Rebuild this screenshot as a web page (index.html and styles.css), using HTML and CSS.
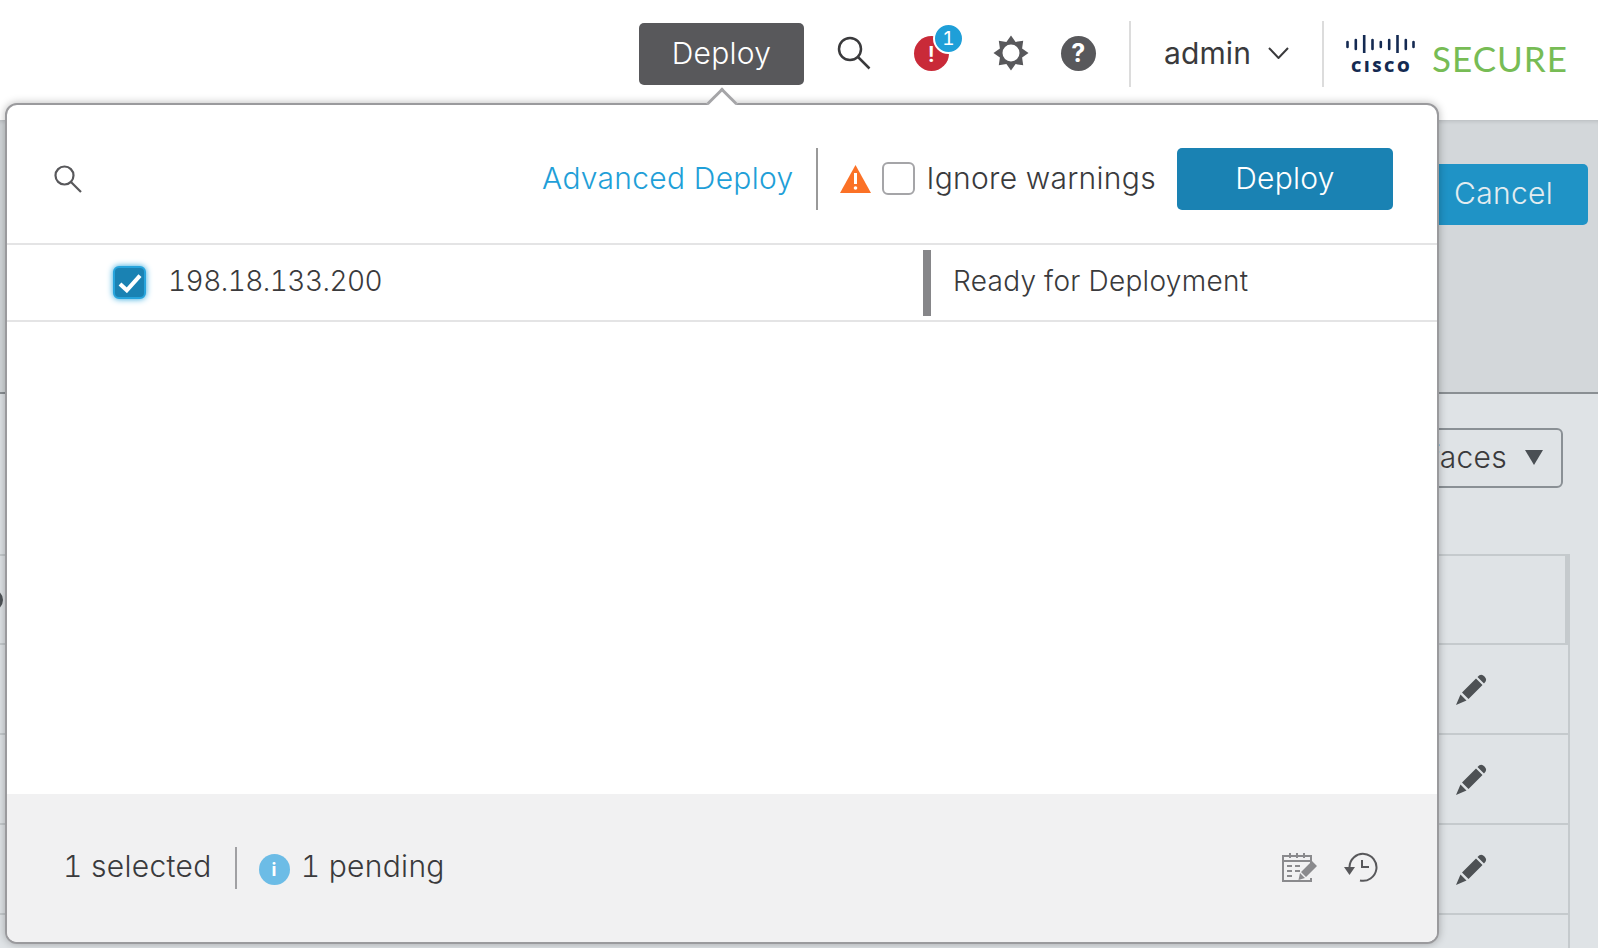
FILE: index.html
```html
<!DOCTYPE html>
<html lang="en">
<head>
<meta charset="utf-8">
<title>Deploy</title>
<link rel="stylesheet" href="styles.css">
</head>
<body>
<div class="page">
  <header class="topbar">
    <button class="top-deploy">Deploy</button>
    <svg class="top-search" viewBox="0 0 34 34"><circle cx="13" cy="13" r="11" /><path d="M21 21 L32.5 32.5" /></svg>
    <div class="alert">!<span class="badge">1</span></div>
    <svg class="gear" viewBox="-18 -18 36 36"><path fill-rule="evenodd" d="M0-17.5 4.6-11.1 12.2-12.2 11.1-4.6 17.5 0 11.1 4.6 12.2 12.2 4.6 11.1 0 17.5-4.6 11.1-12.2 12.2-11.1 4.6-17.5 0-11.1-4.6-12.2-12.2-4.6-11.1Z M0-8.5A8.5 8.5 0 1 0 0 8.5 8.5 8.5 0 1 0 0-8.5Z" /></svg>
    <div class="help">?</div>
    <div class="top-sep sep-a"></div>
    <div class="user">admin</div>
    <svg class="chevron" viewBox="0 0 21 12"><path d="M1 1 L10.5 11 L20 1" /></svg>
    <div class="top-sep sep-b"></div>
    <div class="cisco">
      <svg class="cisco-bars" viewBox="0 0 69 18"><path d="M1.5 7v5M9.8 5v9M18.2 0v18M26.5 5v9M34.8 7v5M43.2 5v9M51.5 0v18M59.8 5v9M67.5 7v5" /></svg>
      <div class="cisco-word">CISCO</div>
    </div>
    <div class="secure">SECURE</div>
  </header>

  <section class="band">
    <button class="cancel">Cancel</button>
  </section>

  <main class="content">
    <div class="filters">
      <div class="select">All Interfaces <span class="caret"></span></div>
    </div>
    <div class="table">
      <div class="table-head"><span class="sort-dot"></span></div>
      <div class="table-row"><svg class="pencil" viewBox="0 0 31 31"><use href="#pencil-shape" /></svg></div>
      <div class="table-row"><svg class="pencil" viewBox="0 0 31 31"><use href="#pencil-shape" /></svg></div>
      <div class="table-row"><svg class="pencil" viewBox="0 0 31 31"><use href="#pencil-shape" /></svg></div>
      <div class="table-row"></div>
    </div>
  </main>

  <div class="popover">
    <span class="tip"></span>
    <div class="pop-head">
      <svg class="pop-search" viewBox="0 0 28 28"><circle cx="10.5" cy="10.5" r="9" /><path d="M17 17 L27 27" /></svg>
      <a class="advanced">Advanced Deploy</a>
      <div class="pop-sep"></div>
      <svg class="warn" viewBox="0 0 31 28"><path d="M15.500 0 L31 28 H0 Z" fill="#fb7126" /><path d="M15.500 8v11" stroke="#fff" stroke-width="3" /><circle cx="15.500" cy="23" r="1.800" fill="#fff" /></svg>
      <span class="box"></span>
      <span class="ignore">Ignore warnings</span>
      <button class="pop-deploy">Deploy</button>
    </div>
    <div class="device">
      <div class="device-name">
        <span class="box-on"><svg class="tick" viewBox="0 0 26 22"><path d="M2 12 L9.500 19 L24 3" /></svg></span>
        <span class="ip">198.18.133.200</span>
      </div>
      <div class="status-bar"></div>
      <div class="status">Ready for Deployment</div>
    </div>
    <div class="pop-body"></div>
    <div class="pop-foot">
      <span class="foot-text">1 selected</span>
      <div class="foot-sep"></div>
      <span class="info">i</span>
      <span class="foot-text">1 pending</span>
      <div class="foot-icons">
        <svg class="calendar" viewBox="0 0 36 30">
          <path class="cal-line" d="M29 18V4H1V29H29V26M1 9H29M8 1V6M15 1V6M22 1V6" />
          <path class="cal-dots" d="M5 14H10M13 14H18M5 19H10M13 19H18M5 24H10" />
          <path class="cal-pen" d="M19 20 L30 9 L35 14 L24 25 Z M18 21 L23 26 L16.500 28 Z" />
        </svg>
        <svg class="history" viewBox="0 0 34 30">
          <path class="hist-line" d="M5.500 15 A13.500 13.500 0 1 1 16 28.500 M18 8 V15 H25" />
          <path class="hist-arrow" d="M0 15 H11 L5.500 23 Z" />
        </svg>
      </div>
    </div>
  </div>
</div>
<svg class="defs" width="0" height="0"><defs><g id="pencil-shape"><path d="M6 18.500 L20 4.500 L26.500 11 L12.500 25 Z M21.500 3 Q25 -1 28.500 2.500 Q32 6 28 9.500 Z M4.500 20.500 L10.500 26.500 L0 31 Z" /></g></defs></svg>
</body>
</html>
```
FILE: styles.css
```css
* { box-sizing: border-box; }
html, body { margin: 0; height: 100%; overflow: hidden; }
body { font-family: Inter, "Liberation Sans", sans-serif; color: #3a3a3c; font-size: 30px; font-weight: 350; letter-spacing: .3px; font-variant-numeric: tabular-nums; }
button { font: inherit; letter-spacing: inherit; border: 0; }

.page { position: relative; width: 1598px; height: 948px; overflow: hidden; display: flex; flex-direction: column; background: #dfe3e6; }

/* top bar */
.topbar { height: 120px; flex: none; background: #fff; display: flex; align-items: center; padding: 0 0 14px 639px; }
.topbar > * { flex: none; }
.top-deploy { width: 165px; height: 62px; margin-top: 2px; padding-bottom: 4px; background: #58585b; color: #fff; border-radius: 5px; }
.top-search { width: 34px; height: 34px; margin-left: 33px; fill: none; stroke: #3a3a3c; stroke-width: 2.5; }
.alert { position: relative; width: 35px; height: 35px; margin-left: 43px; border-radius: 50%; background: #c92a38; color: #fff; font-weight: 600; font-size: 22px; line-height: 36px; text-align: center; }
.badge { position: absolute; left: 19px; top: -13px; width: 31px; height: 31px; border-radius: 50%; background: #1f9fd8; border: 2px solid #fff; color: #fff; font-size: 19px; font-weight: 400; line-height: 27px; text-align: center; }
.gear { width: 36px; height: 36px; margin-left: 44px; fill: #58585b; }
.help { width: 35px; height: 35px; margin-left: 32px; border-radius: 50%; background: #58585b; color: #fff; font-size: 25px; font-weight: 700; line-height: 35px; text-align: center; }
.top-sep { width: 2px; height: 66px; margin-top: 2px; background: #dcdcdc; }
.sep-a { margin-left: 33px; }
.user { margin-left: 33px; font-size: 30px; font-weight: 400; letter-spacing: .1px; }
.chevron { width: 21px; height: 12px; margin-left: 17px; fill: none; stroke: #3a3a3c; stroke-width: 2; }
.sep-b { margin-left: 33px; }
.cisco { margin-left: 22px; width: 69px; display: flex; flex-direction: column; align-items: center; margin-top: 2px; }
.cisco-bars { width: 69px; height: 18px; fill: none; stroke: #142a52; stroke-width: 2.6; stroke-linecap: round; }
.cisco-word { font-family: "Open Sans", sans-serif; font-weight: 800; font-size: 16px; line-height: 15px; letter-spacing: 2.6px; margin-right: -2.6px; color: #142a52; margin-top: 6px; }
.secure { margin-left: 17px; margin-top: 10px; font-family: Lato, sans-serif; font-size: 35px; font-weight: 400; letter-spacing: 1px; color: #77bc55; line-height: 40px; }

/* page behind the popover */
.band { height: 274px; flex: none; background: #d3d7da; border-bottom: 2px solid #8a8f93; box-shadow: inset 0 4px 4px -3px rgba(0,0,0,.14); display: flex; justify-content: flex-end; align-items: flex-start; padding: 44px 10px 0 0; }
.cancel { width: 300px; height: 61px; padding: 0 35px 3px 0; background: #1f93c6; color: #e2ecf0; border-radius: 5px; text-align: right; }
.content { flex: 1; min-height: 0; overflow: hidden; padding-top: 34px; background: #dfe3e6; }
.filters { display: flex; justify-content: flex-end; padding-right: 35px; height: 60px; }
.select { width: 300px; height: 60px; padding: 0 18px 2px 0; border: 2px solid #8a9095; border-radius: 6px; display: flex; align-items: center; justify-content: flex-end; gap: 18px; }
.caret { width: 0; height: 0; border-left: 9px solid transparent; border-right: 9px solid transparent; border-top: 15px solid #4a4f54; }
.table { margin-top: 66px; width: 1570px; border-right: 2px solid #c5cacd; }
.table-head { height: 91px; border-top: 2px solid #c5cacd; border-bottom: 2px solid #c5cacd; border-right: 3px solid #c5cacd; display: flex; align-items: center; }
.sort-dot { width: 22px; height: 22px; margin-left: -19px; border-radius: 50%; background: #4f5357; }
.table-row { height: 90px; border-bottom: 2px solid #c5cacd; display: flex; align-items: center; justify-content: flex-end; padding-right: 81px; }
.pencil { width: 31px; height: 31px; fill: #4d5154; }
.defs { position: absolute; }

/* popover */
.popover { position: absolute; left: 5px; top: 103px; width: 1434px; height: 841px; background: #fff; border: 2px solid #9a9a9d; border-radius: 12px; box-shadow: 0 0 8px rgba(0,0,0,.28); display: flex; flex-direction: column; }
.tip { position: absolute; left: 704px; top: -13px; width: 22px; height: 22px; background: #fff; border-top: 3px solid #a5a5a8; border-left: 3px solid #a5a5a8; transform: rotate(45deg); }
.pop-head { height: 140px; flex: none; display: flex; align-items: center; padding: 10px 44px 0 47px; border-bottom: 2px solid #e4e4e5; position: relative; }
.pop-search { width: 28px; height: 28px; fill: none; stroke: #58585b; stroke-width: 2.2; }
.advanced { margin: 0 0 3px auto; color: #1f9fd8; }
.pop-sep { width: 2px; height: 62px; margin-left: 22px; background: #999; }
.warn { width: 31px; height: 28px; margin-left: 22px; }
.box { width: 33px; height: 33px; margin-left: 11px; margin-bottom: 2px; border: 2px solid #a5a5a8; border-radius: 6px; }
.ignore { margin: 0 0 3px 12px; }
.pop-deploy { width: 216px; height: 62px; margin-left: 21px; padding-bottom: 3px; background: #1a82b3; color: #fff; border-radius: 5px; }
.device { height: 77px; flex: none; display: flex; align-items: center; border-bottom: 2px solid #e4e4e5; }
.device-name { width: 916px; display: flex; align-items: center; padding-left: 106px; }
.box-on { width: 33px; height: 33px; background: #1a82b3; border: 2px solid #27a4dc; border-radius: 6px; box-shadow: 0 0 6px #27a4dc; display: flex; align-items: center; justify-content: center; }
.tick { width: 24px; height: 20px; fill: none; stroke: #fff; stroke-width: 4.5; }
.ip { margin: 0 0 3px 22px; font-size: 28px; letter-spacing: -.55px; }
.status-bar { width: 8px; height: 66px; background: #868689; }
.status { margin: 0 0 3px 22px; font-size: 28px; }
.pop-body { flex: 1; }
.pop-foot { height: 148px; flex: none; background: #f1f1f2; border-radius: 0 0 10px 10px; display: flex; align-items: center; padding: 0 59px 0 56px; }
.foot-text { margin-bottom: 5px; }
.foot-sep { width: 2px; height: 42px; margin: 0 22px 0 23px; background: #a0a0a3; }
.info { width: 31px; height: 31px; margin-right: 11px; margin-top: 3px; border-radius: 50%; background: #6cbce6; color: #fff; font-size: 18px; font-weight: 700; line-height: 31px; text-align: center; }
.foot-icons { margin: 0 0 3px auto; display: flex; align-items: center; gap: 26px; }
.calendar { width: 36px; height: 30px; }
.cal-line { fill: none; stroke: #8a8a8d; stroke-width: 2; }
.cal-dots { fill: none; stroke: #8a8a8d; stroke-width: 2; }
.cal-pen { fill: #8a8a8d; }
.history { width: 34px; height: 30px; }
.hist-line { fill: none; stroke: #58585b; stroke-width: 2; }
.hist-arrow { fill: #58585b; }
```
